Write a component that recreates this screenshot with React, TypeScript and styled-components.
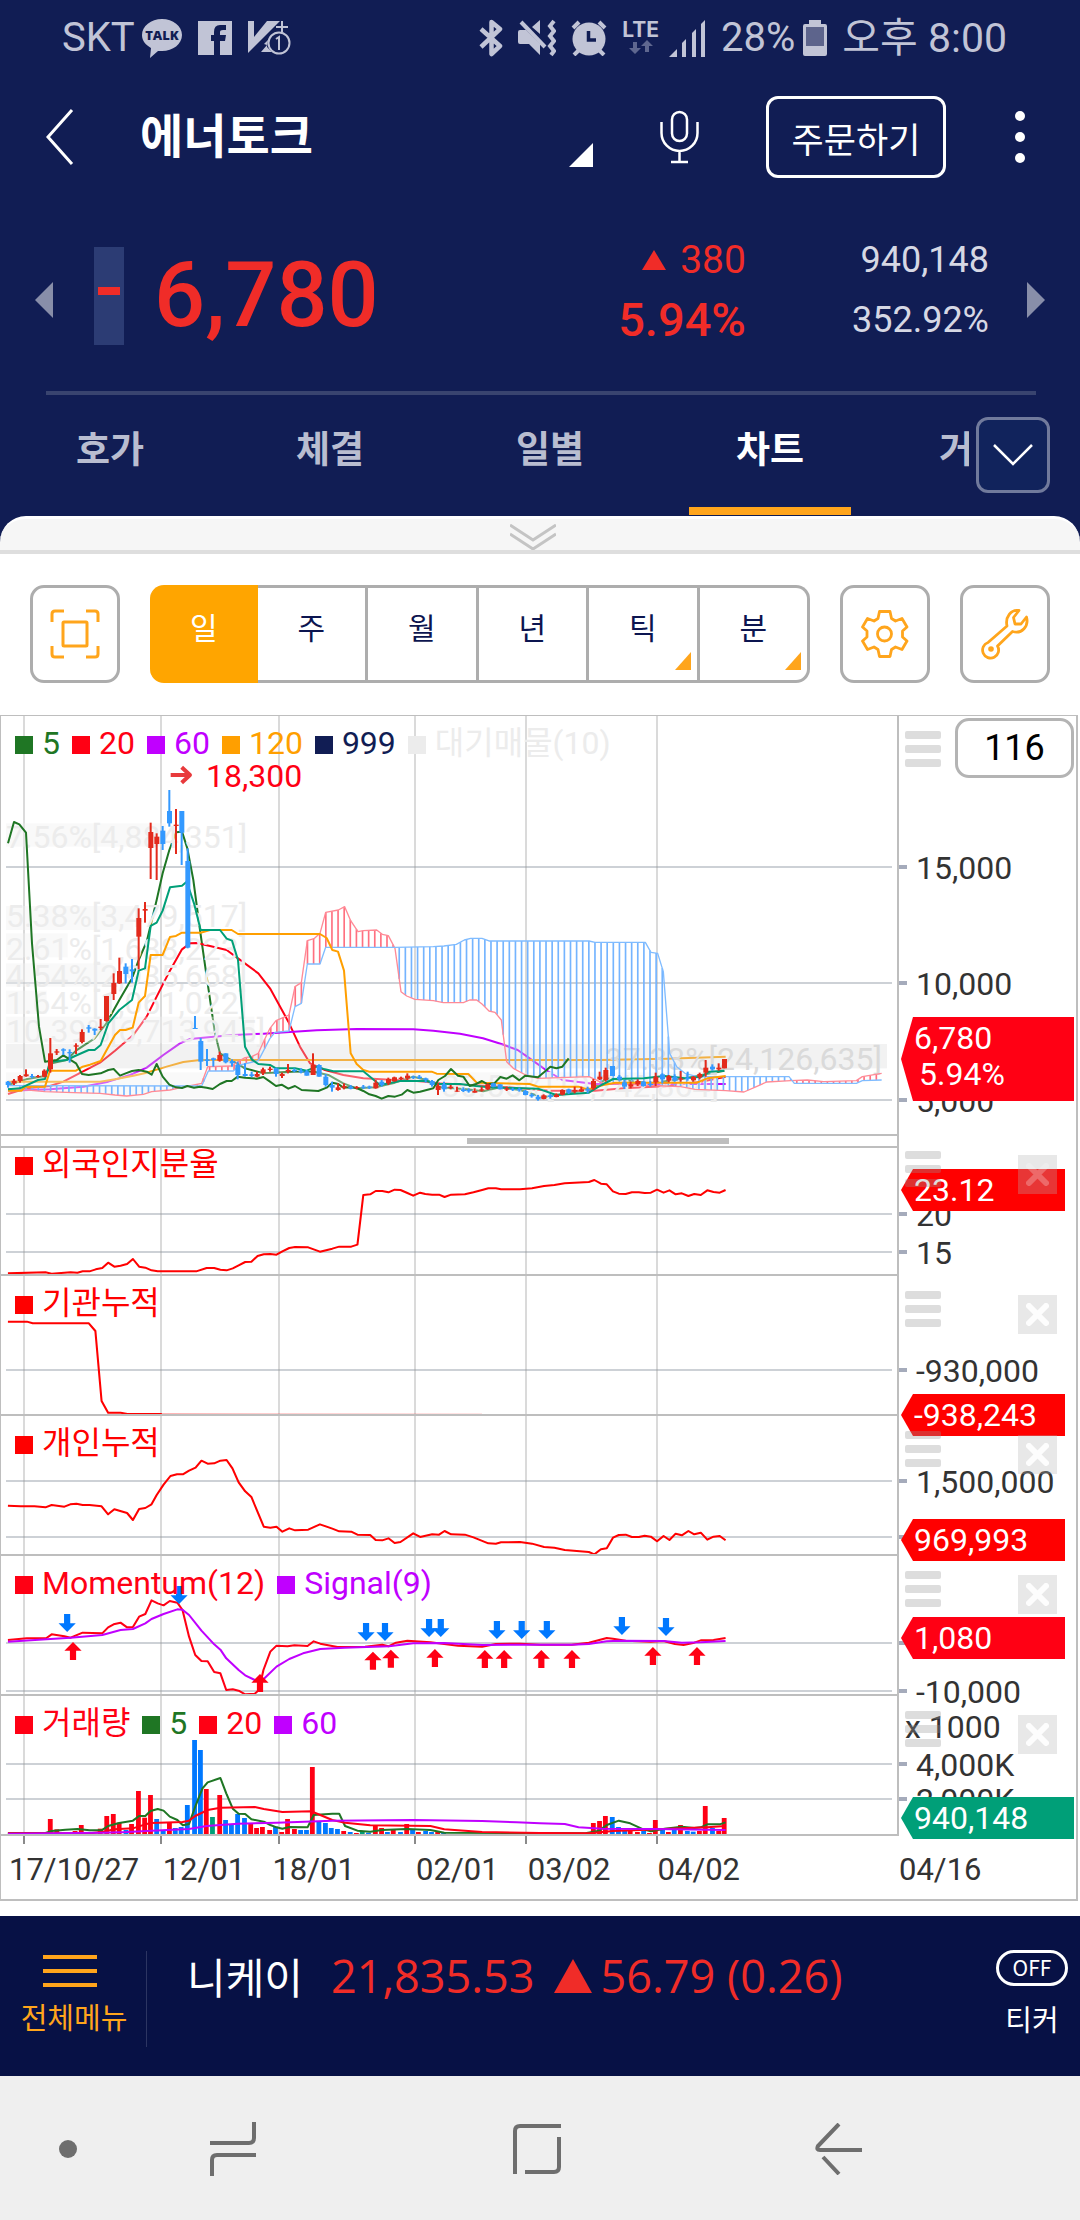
import React from "react";
import styled, { createGlobalStyle } from "styled-components";

const GlobalStyle = createGlobalStyle`
  *, *::before, *::after { box-sizing: border-box; }
  body {
    margin: 0;
    background: #ffffff;
    font-family: Roboto, "Noto Sans CJK KR", sans-serif;
  }
  button, input {
    font-family: inherit;
    margin: 0;
    padding: 0;
    border: 0;
    background: none;
    color: inherit;
  }
  svg { display: block; flex: none; }
  h1, p { margin: 0; }
`;

/* ---------- palette ---------- */
const NAVY = "#111d54";
const ORANGE = "#ffa51c";
const RED = "#ff0014";
const BRIGHT_RED = "#ff0000";
const GREEN = "#1f7624";
const TEAL = "#009f78";
const PURPLE = "#c000ff";
const UP = "#e32a1c";
const DOWN = "#3399ff";
const PRICE_RED = "#f02c28";
const LINE = "#bebebe";
const STATUS = "#c1c4d6";

/* ---------- page shell ---------- */
const Page = styled.main`
  display: flex;
  flex-direction: column;
  width: 100%;
`;

const Header = styled.header`
  background: ${NAVY};
  color: #fff;
  display: flex;
  flex-direction: column;
`;

const StatusBar = styled.div`
  height: 74px;
  padding: 2px 73px 0 62px;
  display: flex;
  justify-content: space-between;
  align-items: center;
  color: ${STATUS};
  font-size: 40px;
  line-height: 40px;
`;

const StatusGroup = styled.div<{ $gap: number }>`
  display: flex;
  align-items: center;
  gap: ${(p) => p.$gap}px;
`;

const Clock = styled.span`
  font-size: 41px;
`;

const Lte = styled.div`
  display: flex;
  flex-direction: column;
  align-items: center;
  margin-right: -5px;
  font-family: Inter, sans-serif;
  font-size: 21px;
  line-height: 20px;
  font-weight: 700;
`;

const TitleBar = styled.div`
  height: 126px;
  padding: 0 55px 0 46px;
  display: flex;
  align-items: center;
`;

const IconButton = styled.button`
  display: flex;
  align-items: center;
  justify-content: center;
  cursor: pointer;
`;

const StockPicker = styled.button`
  flex: 1;
  margin: 0 67px 0 66px;
  height: 60px;
  display: flex;
  justify-content: space-between;
  align-items: center;
  font-size: 47px;
  line-height: 60px;
  font-weight: 700;
  cursor: pointer;
`;

const PickerMark = styled.svg`
  align-self: flex-end;
`;

const OrderButton = styled.button`
  width: 180px;
  height: 82px;
  margin: 0 69px 0 67px;
  border: 3px solid #fff;
  border-radius: 12px;
  font-size: 35px;
  cursor: pointer;
`;

const Quote = styled.section`
  height: 191px;
  padding: 0 35px;
  display: flex;
  align-items: center;
`;

const DayRange = styled.div`
  width: 30px;
  height: 98px;
  margin: 0 30px 0 41px;
  background: #2c3c74;
  display: flex;
  justify-content: center;
  align-items: center;
`;

const RangeBar = styled.span`
  width: 22px;
  height: 8px;
  margin-bottom: 10px;
  background: ${PRICE_RED};
`;

const Price = styled.p`
  flex: 1;
  color: ${PRICE_RED};
  font-size: 90px;
  font-weight: 500;
`;

const Figures = styled.div<{ $color: string; $size: number; $gap: number }>`
  display: flex;
  flex-direction: column;
  align-items: flex-end;
  color: ${(p) => p.$color};
  font-size: ${(p) => p.$size}px;
  line-height: 60px;
  margin: 0 ${(p) => p.$gap}px 11px 0;
`;

const Change = styled.p`
  display: flex;
  align-items: center;
  gap: 14px;
`;

const Rate = styled.p`
  font-size: 47px;
  font-weight: 500;
`;

const Divider = styled.hr`
  height: 4px;
  width: auto;
  margin: 0 44px 0 46px;
  border: 0;
  background: #39446f;
`;

const TabBar = styled.nav`
  height: 121px;
  padding-right: 30px;
  display: flex;
`;

const TabList = styled.div`
  flex: 1;
  min-width: 0;
  height: 120px;
  display: flex;
  overflow: hidden;
  margin-right: 7px;
`;

const Tab = styled.button<{ $active?: boolean }>`
  flex: none;
  width: 220px;
  height: 120px;
  display: flex;
  flex-direction: column;
  align-items: center;
  justify-content: space-between;
  padding-top: 30px;
  font-size: 37px;
  line-height: 52px;
  font-weight: 700;
  color: ${(p) => (p.$active ? "#fff" : "#b9bdd0")};
  cursor: pointer;
  &::after {
    content: "";
    width: 162px;
    height: 8px;
    background: ${(p) => (p.$active ? ORANGE : "transparent")};
  }
`;

const MoreTabs = styled.button`
  width: 74px;
  height: 76px;
  margin-top: 22px;
  border: 3px solid #717a9c;
  border-radius: 12px;
  background: #11235c;
  display: flex;
  align-items: center;
  justify-content: center;
  cursor: pointer;
`;

const SheetEdge = styled.div`
  background: ${NAVY};
`;

const SheetHandle = styled.button`
  width: 100%;
  height: 38px;
  display: flex;
  justify-content: center;
  padding-top: 5px;
  padding-right: 14px;
  background: #f6f6f6;
  border-top: 3px solid #fff;
  border-bottom: 4px solid #dedede;
  border-radius: 26px 26px 0 0;
  cursor: pointer;
`;

/* ---------- toolbar ---------- */
const Toolbar = styled.div`
  height: 161px;
  padding: 0 30px 2px;
  display: flex;
  align-items: center;
  gap: 30px;
`;

const ToolButton = styled.button`
  flex: none;
  width: 90px;
  height: 98px;
  border: 3px solid #adadad;
  border-radius: 14px;
  display: flex;
  align-items: center;
  justify-content: center;
  cursor: pointer;
`;

const Segments = styled.div`
  flex: 1;
  display: flex;
  border-radius: 14px;
`;

const Segment = styled.button<{ $active?: boolean }>`
  flex: 1;
  height: 98px;
  display: grid;
  padding-bottom: 10px;
  place-items: center;
  position: relative;
  font-size: 30px;
  line-height: 40px;
  color: ${(p) => (p.$active ? "#fff" : "#0c1550")};
  background: ${(p) => (p.$active ? "#ffa500" : "#fff")};
  border: 3px solid ${(p) => (p.$active ? "#ffa500" : "#adadad")};
  border-left-width: 0;
  cursor: pointer;
  &:first-child { border-radius: 14px 0 0 14px; border-right-width: 0; }
  &:last-child { border-radius: 0 14px 14px 0; }
`;

const Corner = styled.svg`
  position: absolute;
  right: 6px;
  bottom: 10px;
`;

/* ---------- chart ---------- */
const Chart = styled.section`
  margin-right: 2px;
  border: solid ${LINE};
  border-width: 1px 2px 2px 1px;
`;

const PanelBox = styled.div<{ $h: number }>`
  position: relative;
  height: ${(p) => p.$h}px;
  display: grid;
  grid-template-columns: minmax(0, 1fr) 177px;
`;

const Plot = styled.div`
  position: relative;
  border-right: 2px solid ${LINE};
  border-bottom: 2px solid ${LINE};
  overflow: hidden;
`;

const Canvas = styled.svg`
  width: 100%;
  height: 100%;
`;

const Legend = styled.div<{ $tight?: boolean }>`
  position: absolute;
  left: 14px;
  top: ${(p) => (p.$tight ? -2 : 9)}px;
  display: flex;
  gap: 12px;
  font-size: 32px;
  line-height: 36px;
  white-space: nowrap;
`;

const LegendItem = styled.span<{ $color: string }>`
  display: flex;
  align-items: center;
  gap: 9px;
  color: ${(p) => p.$color};
  &::before {
    content: "";
    width: 18px;
    height: 18px;
    margin-top: 4px;
    background: ${(p) => p.$color};
  }
`;

const Axis = styled.div`
  position: relative;
  color: #333;
  font-size: 32px;
  line-height: 36px;
`;

const AxisLabel = styled.span<{ $y: number; $left?: number }>`
  position: absolute;
  left: ${(p) => p.$left ?? 17}px;
  top: ${(p) => p.$y - 18}px;
  white-space: nowrap;
`;

const Tick = styled.span<{ $y: number }>`
  position: absolute;
  left: 0;
  top: ${(p) => p.$y - 2}px;
  width: 8px;
  height: 4px;
  background: #a5abbb;
`;

const Tag = styled.strong<{ $y: number; $h: number; $color: string; $wide?: boolean }>`
  position: absolute;
  left: 2px;
  right: ${(p) => (p.$wide ? 2 : 11)}px;
  top: ${(p) => p.$y - p.$h / 2}px;
  height: ${(p) => p.$h}px;
  padding-left: 13px;
  padding-bottom: ${(p) => (p.$h > 42 ? 6 : 0)}px;
  display: flex;
  flex-direction: column;
  justify-content: center;
  color: #fff;
  font-weight: 400;
  background: ${(p) => p.$color};
  clip-path: polygon(12px 0, 100% 0, 100% 100%, 12px 100%, 0 50%);
`;

const TagRate = styled.span`
  padding-left: 5px;
`;

const Grip = styled.button<{ $tight?: boolean }>`
  position: absolute;
  left: 6px;
  top: ${(p) => (p.$tight ? 3 : 15)}px;
  width: 36px;
  height: 36px;
  display: flex;
  flex-direction: column;
  justify-content: space-between;
  cursor: grab;
  i {
    height: 8px;
    border-radius: 2px;
    background: rgba(148, 148, 148, 0.32);
  }
`;

const CloseButton = styled.button<{ $tight?: boolean }>`
  position: absolute;
  right: 19px;
  top: ${(p) => (p.$tight ? 7 : 19)}px;
  width: 39px;
  height: 39px;
  background: rgba(180, 180, 180, 0.3);
  display: grid;
  place-items: center;
  cursor: pointer;
`;

const BarCount = styled.input`
  position: absolute;
  right: 2px;
  top: 2px;
  width: 119px;
  height: 60px;
  border: 3px solid #b4b4b4;
  border-radius: 14px;
  background: #fff;
  color: #000;
  font-size: 36px;
  text-align: center;
`;

const ScrollStrip = styled.div`
  height: 12px;
  display: grid;
  grid-template-columns: minmax(0, 1fr) 177px;
`;

const ScrollTrack = styled.div`
  border-right: 2px solid ${LINE};
  border-bottom: 2px solid ${LINE};
  display: grid;
  grid-template-columns: 466fr 262fr 168fr;
  align-items: center;
`;

const ScrollThumb = styled.span`
  grid-column: 2;
  height: 6px;
  background: ${LINE};
`;

const DateAxis = styled.div`
  height: 63px;
  padding: 16px 0 0 8px;
  display: grid;
  grid-template-columns: 154fr 110fr 144fr 112fr 130fr 242fr 177px;
  color: #333;
  font-size: 31px;
  line-height: 36px;
  position: relative;
`;

const DateTicks = styled.svg`
  position: absolute;
  left: 0;
  top: 0;
  width: calc(100% - 177px);
  height: 8px;
`;

/* ---------- footer ---------- */
const TickerBar = styled.footer`
  margin-top: 15px;
  height: 160px;
  padding: 0 11px 0 20px;
  display: flex;
  align-items: flex-start;
  background: #071145;
  color: #fff;
  font-family: "Noto Sans CJK KR", sans-serif;
`;

const MenuButton = styled.button`
  width: 108px;
  padding-top: 39px;
  display: flex;
  flex-direction: column;
  align-items: center;
  gap: 9px;
  color: ${ORANGE};
  font-size: 29px;
  line-height: 40px;
  white-space: nowrap;
  cursor: pointer;
  svg { margin-right: 8px; }
`;

const Separator = styled.span`
  width: 1px;
  height: 96px;
  margin: 35px 40px 0 18px;
  background: #2c3562;
`;

const IndexName = styled.span`
  margin-top: 30px;
  margin-right: 28px;
  font-size: 42px;
  line-height: 60px;
`;

const IndexValue = styled.span`
  flex: 1;
  margin-top: 30px;
  display: flex;
  align-items: center;
  gap: 9px;
  color: ${PRICE_RED};
  font-family: "Open Sans", "Noto Sans CJK KR", sans-serif;
  font-size: 45px;
  line-height: 60px;
  font-weight: 400;
  white-space: nowrap;
  svg { margin-left: 10px; }
`;

const TickerToggle = styled.button`
  width: 74px;
  padding-top: 34px;
  display: flex;
  flex-direction: column;
  align-items: center;
  gap: 12px;
  font-size: 29px;
  line-height: 40px;
  cursor: pointer;
`;

const Pill = styled.span`
  width: 72px;
  height: 36px;
  border: 3px solid #fff;
  border-radius: 18px;
  font-size: 21px;
  line-height: 29px;
`;

const NavBar = styled.nav`
  height: 144px;
  padding: 2px 217px 0 59px;
  display: flex;
  align-items: center;
  justify-content: space-between;
  background: #efefef;
`;

const NavPair = styled.div`
  display: flex;
  align-items: center;
  gap: 133px;
`;

/* ---------- chart data and helpers ---------- */
const MONTHS = [24, 161, 279, 415, 526, 657];

type Point = [number, number];

const parse = (s: string): Point[] =>
  s.trim().split(/\s+/).map((p) => p.split(",").map(Number) as Point);

const valueAt = (line: Point[], x: number): number | null => {
  for (let i = 1; i < line.length; i++) {
    const [x0, y0] = line[i - 1];
    const [x1, y1] = line[i];
    if (x >= x0 && x <= x1) return x1 === x0 ? y1 : y0 + ((y1 - y0) * (x - x0)) / (x1 - x0);
  }
  return null;
};

const Trace = ({ points, color, width = 6, opacity = 1 }: { points: string; color: string; width?: number; opacity?: number }) => (
  <polyline points={points} fill="none" stroke={color} strokeWidth={width} opacity={opacity} strokeLinejoin="round" />
);

const Grid = ({ rows, top, height }: { rows: number[]; top: number; height: number }) => (
  <g>
    {rows.map((y) => (
      <rect key={y} x={6} y={y - 1} width={886} height={2} fill="#cdd1d6" />
    ))}
    {MONTHS.map((x) => (
      <rect key={x} x={x - 1} y={top} width={2} height={height} fill="#969696" opacity={0.35} />
    ))}
  </g>
);

const LAGGING =
  "24,430 42,366 58,373 78,398 96,730 117,980 135,1085 150,1083 170,1080 190,1066 209,1078 228,1090 246,1122 266,1125 302,1120 325,1110 341,1107 360,1127 377,1120 396,1113 416,1110 440,1115 455,1124 470,1092 488,1130 508,1154 528,1162 546,1164 562,1158 582,1163 600,1160 620,1163 638,1167 660,1152 680,1143 695,1143 713,1130 735,1133 770,1136 790,1131 810,1145 828,1158 845,1154 865,1166 885,1158 905,1170 955,1173 980,1163 997,1148 1015,1152 1030,1163 1050,1162 1070,1164 1090,1173 1108,1183 1127,1188 1145,1196 1165,1188 1185,1190 1205,1184 1222,1170 1240,1178 1260,1175 1280,1170 1300,1165 1315,1140 1335,1128 1353,1107 1374,1127 1390,1130 1409,1158 1428,1152 1446,1143 1463,1153 1483,1150 1501,1131 1520,1136 1538,1126 1558,1141 1576,1127 1614,1132 1632,1117 1651,1100 1669,1105 1687,1100 1706,1075";
const MA5 =
  "24,1155 78,1138 135,1128 155,1090 200,1080 228,1052 284,1015 319,970 358,900 396,835 416,780 440,725 470,600 488,520 508,450 528,397 546,395 562,445 580,540 600,690 620,830 645,1000 660,1060 690,1078 735,1105 790,1120 885,1115 940,1115 985,1125 1030,1150 1070,1165 1127,1162 1185,1148 1240,1130 1280,1140 1320,1162 1400,1168 1450,1174 1500,1162 1560,1170 1630,1192 1720,1176 1780,1166 1820,1135 1870,1140 1950,1150 2040,1138 2120,1122 2173,1112";
const MA20 =
  "24,1182 80,1165 150,1158 190,1145 248,1115 300,1088 345,1052 400,1005 440,950 470,890 508,815 546,748 570,730 590,729 630,738 680,750 714,775 775,820 810,865 865,965 900,1040 930,1090 975,1110 1030,1125 1090,1135 1185,1140 1250,1143 1320,1150 1500,1160 1650,1172 1785,1172 1871,1165 2006,1158 2104,1145 2177,1130";
const MA60 =
  "24,1172 150,1168 250,1160 325,1145 390,1125 440,1103 490,1065 540,1030 570,1017 625,1012 700,1005 790,1001 870,996 950,991 1070,987 1240,988 1300,992 1380,1001 1449,1015 1504,1032 1553,1050 1589,1075 1638,1110 1687,1140 1785,1152 2177,1152";
const MA120 = "24,1145 300,1145 345,1138 400,1127 440,1118 500,1100 550,1086 600,1080 1800,1080 2000,1076 2177,1070";
const CONVERSION =
  "24,1168 60,1165 114,1140 135,1137 150,1085 200,1080 225,1068 266,1050 284,1050 302,1035 325,970 358,930 396,900 416,812 435,805 452,678 470,668 488,632 510,562 546,557 560,545 582,610 602,690 660,690 680,716 696,722 714,780 735,1040 755,1078 775,1092 810,1095 828,1105 885,1105 920,1112 950,1100 975,1108 1000,1114 1090,1114 1110,1130 1140,1155 1200,1143 1280,1143 1310,1152 1380,1152 1428,1158 1467,1162 1614,1166 1669,1185 1767,1178 1804,1155 1840,1137 1932,1135 1993,1128 2055,1135 2104,1130 2128,1115 2173,1112";
const BASE =
  "24,1172 65,1172 75,1160 135,1160 150,1112 228,1112 248,1100 270,1094 302,1083 320,1050 345,1005 360,990 377,990 398,983 416,908 435,888 452,765 488,765 510,711 528,708 546,698 602,698 630,690 695,690 714,702 960,702 980,714 997,750 1014,755 1032,812 1052,1060 1070,1092 1090,1110 1108,1115 1295,1115 1310,1121 1405,1122 1430,1148 1589,1152 1614,1160 1736,1160 1755,1166 1773,1166 1810,1155 1846,1148 2091,1148 2122,1135 2177,1128";
const SPAN_A =
  "24,1165 60,1168 135,1175 220,1178 300,1180 345,1185 380,1188 430,1183 455,1175 510,1170 545,1162 605,1150 623,1100 695,1098 715,1085 735,1073 755,1070 775,1060 793,1020 810,985 828,962 867,945 885,860 904,848 922,722 942,716 960,700 977,637 1015,630 1034,620 1052,662 1074,695 1090,692 1130,690 1147,703 1165,707 1185,745 1203,875 1220,888 1245,898 1300,902 1330,908 1390,908 1409,900 1430,900 1446,912 1467,933 1485,937 1504,960 1520,1085 1540,1105 1577,1125 1614,1135 1767,1130 1810,1150 1993,1158 2042,1160 2085,1168 2177,1172 2232,1176 2269,1160 2300,1146 2373,1142 2422,1140 2471,1145 2569,1142 2587,1130 2645,1120";
const SPAN_B =
  "24,1157 605,1158 625,1113 700,1113 720,1095 775,1082 810,1015 825,997 867,993 885,920 904,910 922,792 960,792 977,742 1185,742 1300,740 1332,738 1369,733 1393,720 1412,715 1446,715 1467,723 1767,723 1785,727 1936,727 1953,757 1973,760 1990,815 2009,1060 2030,1100 2055,1120 2091,1130 2367,1130 2383,1150 2569,1150 2587,1142 2645,1140";

/* x, high, low, body top, body bottom, direction */
const CANDLES = `24,1143,1163,1145,1155,d 42,1137,1155,1142,1150,u 60,1125,1148,1128,1143,u 78,1108,1130,1123,1129,u 96,1122,1135,1128,1131,d
114,1125,1133,1128,1131,u 133,1108,1132,1112,1130,u 151,1014,1118,1060,1108,u 170,1047,1065,1054,1058,u 190,1045,1065,1048,1052,d
209,1048,1088,1056,1060,d 228,1030,1062,1036,1040,u 246,988,1030,996,1026,u 266,975,998,982,986,d 284,985,1005,986,992,d
302,957,990,980,984,u 319,888,965,888,963,u 341,820,900,849,882,u 358,773,852,813,850,u 377,790,850,800,822,d
396,777,848,808,814,d 416,625,808,654,710,u 435,606,668,627,632,u 452,368,537,396,444,u 470,400,540,410,432,u
488,378,450,392,432,d 508,270,380,333,370,d 528,327,462,374,378,u 545,333,495,333,398,d 563,445,745,483,743,d
585,948,987,984,987,d 602,1014,1110,1023,1085,d 621,1047,1098,1078,1083,d 640,1073,1100,1075,1080,d 659,1055,1085,1065,1082,u
677,1060,1090,1060,1087,d 696,1078,1100,1083,1090,d 713,1085,1138,1095,1125,d 735,1090,1130,1122,1128,d 755,1115,1132,1123,1128,d
771,1115,1132,1122,1130,u 789,1103,1125,1108,1120,u 810,1100,1115,1106,1110,u 828,1103,1130,1105,1122,d 846,1118,1134,1122,1128,u
864,1092,1120,1110,1115,u 883,1105,1117,1110,1114,d 903,1105,1120,1112,1117,d 920,1110,1127,1114,1127,d 939,1060,1125,1095,1125,u
957,1093,1130,1095,1130,d 977,1122,1160,1130,1155,d 996,1145,1175,1155,1163,d 1014,1150,1172,1162,1170,u 1032,1150,1168,1158,1163,u
1052,1155,1168,1160,1166,d 1070,1158,1168,1161,1164,u 1090,1155,1167,1160,1163,d 1108,1157,1167,1160,1163,d 1127,1140,1166,1148,1165,u
1145,1140,1160,1145,1155,d 1165,1133,1155,1137,1150,u 1183,1130,1145,1132,1144,u 1203,1130,1140,1133,1137,u 1222,1120,1140,1127,1135,u
1240,1127,1137,1130,1133,d 1258,1125,1137,1130,1134,d 1277,1133,1148,1135,1140,d 1296,1140,1160,1143,1155,d 1314,1150,1185,1157,1170,u
1332,1145,1175,1153,1168,d 1352,1155,1168,1160,1164,u 1371,1160,1175,1172,1175,u 1390,1162,1176,1168,1173,d 1406,1165,1178,1170,1174,d
1424,1165,1178,1173,1178,u 1445,1160,1175,1168,1172,u 1463,1150,1170,1153,1168,u 1480,1148,1162,1150,1160,d 1500,1153,1168,1153,1168,d
1520,1160,1173,1165,1169,u 1538,1163,1173,1167,1170,d 1558,1163,1175,1167,1171,d 1576,1170,1186,1173,1185,d 1595,1180,1193,1184,1189,d
1614,1185,1202,1190,1198,d 1631,1183,1198,1186,1197,u 1651,1182,1196,1186,1191,d 1669,1180,1192,1184,1191,u 1687,1168,1186,1170,1184,u
1706,1166,1182,1168,1178,d 1724,1160,1180,1170,1175,u 1744,1160,1176,1168,1174,u 1763,1160,1180,1166,1172,d 1780,1137,1170,1143,1165,u
1799,1115,1140,1130,1138,u 1817,1103,1145,1110,1140,u 1837,1098,1128,1098,1128,d 1858,1125,1142,1130,1138,d 1873,1140,1167,1147,1160,d
1892,1145,1165,1153,1160,u 1913,1138,1158,1143,1153,u 1930,1143,1160,1145,1158,d 1951,1143,1160,1152,1155,d 1967,1118,1158,1130,1147,u
1987,1120,1150,1123,1138,d 2006,1125,1147,1128,1142,u 2024,1123,1145,1130,1142,d 2042,1113,1145,1135,1139,u 2063,1115,1142,1133,1137,d
2080,1128,1145,1131,1141,u 2099,1118,1138,1122,1132,u 2117,1080,1130,1103,1118,u 2137,1093,1112,1100,1108,d 2156,1090,1112,1103,1108,u
2173,1077,1105,1077,1105,u`
  .trim()
  .split(/\s+/)
  .map((row) => row.split(","));

const cloud = (() => {
  const a = parse(SPAN_A);
  const b = parse(SPAN_B);
  const bars: { x: number; y0: number; y1: number; up: boolean }[] = [];
  for (let x = 60; x < 2645; x += 18.35) {
    const ya = valueAt(a, x);
    const yb = valueAt(b, x);
    if (ya !== null && yb !== null) bars.push({ x, y0: ya, y1: yb, up: ya < yb });
  }
  return bars;
})();

/* share of volume resting at each price band: bar x, y, width, height */
const BANDS = [
  [18, 370, 480, 70],
  [18, 618, 382, 72],
  [18, 700, 185, 72],
  [18, 790, 320, 70],
  [18, 872, 122, 70],
  [18, 950, 745, 80],
];

const VOLUME_AT_PRICE: [string, number][] = [
  ["7.56%[4,884,351]", 148],
  ["5.38%[3,479,517]", 227],
  ["2.61%[1,688,223]", 260],
  ["4.54%[2,935,668]", 287],
  ["1.64%[1,061,022]", 314],
  ["10.39%[6,713,945]", 342],
];

const FOREIGN =
  "23,460 132,457 150,461 205,457 225,458 240,454 260,454 278,448 297,444 314,428 332,440 350,437 369,432 386,417 404,440 422,443 440,451 458,454 570,454 600,444 622,444 640,449 658,451 676,445 693,436 712,426 730,425 748,408 766,403 785,402 803,404 820,394 840,384 857,381 895,382 929,395 965,386 985,380 1020,380 1038,374 1055,225 1075,223 1091,213 1110,213 1128,217 1146,209 1163,210 1183,219 1200,227 1220,218 1235,222 1255,224 1275,224 1291,231 1310,224 1350,223 1375,217 1400,210 1418,205 1440,205 1455,208 1510,208 1545,205 1580,198 1610,195 1640,190 1710,186 1726,180 1745,191 1762,193 1780,214 1797,221 1817,222 1835,217 1855,217 1872,219 1890,218 1908,209 1927,218 1944,211 1962,223 1980,220 1999,228 2016,222 2035,225 2054,211 2072,216 2090,218 2107,210";
const INDIVIDUAL =
  "23,1157 60,1159 100,1159 132,1162 150,1155 187,1160 204,1153 222,1151 240,1155 260,1155 295,1159 314,1183 332,1168 369,1179 386,1200 404,1167 422,1164 440,1153 455,1125 475,1094 495,1068 514,1063 531,1063 549,1052 568,1043 585,1022 603,1031 622,1030 640,1022 658,1020 675,1045 693,1087 712,1114 730,1131 748,1176 766,1220 785,1223 803,1220 820,1235 840,1225 857,1231 895,1229 929,1213 965,1226 985,1234 1020,1235 1038,1244 1075,1245 1091,1260 1110,1261 1128,1255 1146,1269 1163,1266 1200,1240 1220,1251 1255,1243 1275,1244 1291,1233 1310,1243 1350,1244 1375,1252 1418,1270 1440,1271 1455,1267 1510,1266 1545,1271 1580,1281 1610,1283 1640,1290 1710,1296 1726,1303 1745,1288 1762,1285 1780,1253 1797,1245 1817,1244 1835,1251 1855,1251 1872,1247 1890,1250 1908,1264 1927,1248 1944,1260 1962,1241 1980,1246 1999,1233 2016,1243 2035,1238 2054,1259 2072,1250 2090,1248 2107,1261";
const MOMENTUM =
  "23,300 78,295 135,294 150,283 187,289 205,293 240,278 297,280 314,262 330,253 350,248 369,262 386,261 404,230 422,222 440,181 458,190 475,196 493,183 515,188 530,210 549,290 567,345 585,363 603,364 622,396 640,400 657,450 676,448 693,452 712,463 740,461 752,450 765,390 785,335 803,317 835,319 855,316 893,318 911,304 930,311 980,321 1060,320 1110,314 1128,319 1150,308 1183,302 1250,307 1290,312 1330,317 1400,320 1440,312 1510,311 1570,314 1660,314 1710,308 1762,294 1780,296 1817,302 1890,305 1927,303 1960,312 1985,315 2016,308 2035,301 2072,300 2107,294";
const SIGNAL =
  "23,305 135,298 205,293 297,285 350,270 386,267 422,250 440,237 475,222 515,208 530,209 549,225 585,272 622,313 640,329 657,355 693,390 712,406 740,420 752,424 765,418 803,380 840,357 880,340 930,327 1000,323 1130,319 1200,310 1290,309 1400,315 1500,314 1660,314 1710,312 1762,304 1800,302 1927,303 1980,308 2035,307 2107,303";
const SELL_MARKS = parse("195,222 520,138 1063,249 1118,249 1246,237 1280,237 1443,243 1515,243 1588,243 1806,231 1934,234");
const BUY_MARKS = parse("212,306 755,402 1083,335 1135,329 1263,327 1408,330 1464,330 1572,330 1661,330 1896,321 2024,321");

const VOLUMES =
  "146,837,r 165,868,r 218,873,r 236,855,r 291,866,r 310,828,r 329,822,r 346,848,r 366,870,b 382,852,r 402,753,r 420,833,r 437,765,r 455,837,b 474,870,b 492,846,r 509,864,b 526,861,b 544,795,b 565,600,b 582,630,b 599,747,r 617,831,g 638,765,r 655,840,b 672,855,b 690,822,b 710,834,b 728,850,r 745,864,r 762,861,r 783,870,r 800,860,b 818,876,r 835,837,r 855,867,r 873,870,b 890,870,b 907,681,r 926,843,b 945,849,b 962,864,b 980,867,b 998,873,r 1017,876,b 1035,879,r 1052,876,g 1070,878,b 1090,858,r 1108,864,r 1125,876,b 1142,870,r 1163,876,b 1181,852,r 1198,868,b 1215,876,r 1236,873,b 1253,876,b 1271,876,r 1288,879,b 1723,849,r 1741,843,r 1758,828,r 1778,831,b 1796,861,b 1814,873,b 1830,870,r 1851,876,r 1869,873,b 1886,879,r 1903,840,r 1924,868,b 1941,876,r 1958,870,b 1976,855,r 1996,873,b 2013,875,b 2031,873,r 2048,798,r 2069,864,b 2087,873,r 2103,834,r"
    .split(" ")
    .map((v) => v.split(","));
const VOLUME_COLORS: Record<string, string> = { r: RED, b: "#0078ff", g: TEAL };
const VOLUME_MA5 =
  "23,879 132,879 150,873 190,869 225,867 260,871 295,871 314,858 346,849 386,842 404,828 422,828 437,813 458,807 475,812 493,830 515,840 531,856 549,852 567,800 588,745 603,727 640,714 657,760 676,806 693,821 712,822 730,838 766,845 785,855 803,862 820,866 840,861 893,862 911,825 965,821 985,821 1002,858 1038,872 1075,875 1110,870 1181,867 1250,870 1290,878 1700,880 1740,872 1762,855 1797,842 1830,850 1868,868 1890,874 1930,866 1980,860 2016,864 2035,862 2054,853 2090,853 2107,847";
const VOLUME_MA20 =
  "23,880 260,880 297,876 332,868 386,865 422,853 440,849 530,846 549,842 567,828 603,810 640,803 740,801 766,807 820,816 905,814 930,825 965,840 1002,848 1075,856 1250,858 1290,868 1400,876 1568,879 1710,880 1780,873 1860,870 1980,865 2054,862 2107,858";
const VOLUME_MA60 =
  "23,881 300,878 369,876 440,872 549,867 600,858 690,851 803,848 965,842 1200,840 1400,843 1500,847 1568,850 1640,852 1680,862 1750,866 1900,867 2107,870";

const PRICE_SCALE = "scale(0.33333)";
const STUDY_SCALE = "scale(0.34436 0.33333)";

const Handle = ({ name, tight }: { name: string; tight?: boolean }) => (
  <Grip $tight={tight} aria-label={`${name} 이동`}>
    <i />
    <i />
    <i />
  </Grip>
);

const Close = ({ name, tight }: { name: string; tight?: boolean }) => (
  <CloseButton $tight={tight} aria-label={`${name} 닫기`}>
    <svg width="23" height="23" viewBox="0 0 23 23">
      <path d="M3 3 L20 20 M20 3 L3 20" stroke="#fff" strokeWidth="6" strokeLinecap="round" opacity={tight ? 0.25 : 0.95} />
    </svg>
  </CloseButton>
);

type StudyProps = {
  name: string;
  height: number;
  top: number;
  rows: number[];
  legend: [string, string][];
  labels: [string, number][];
  tag: [string, number];
  tagColor?: string;
  wideTag?: boolean;
  tight?: boolean;
  unit?: string;
  children: React.ReactNode;
};

const Study = ({ name, height, top, rows, legend, labels, tag, tagColor = BRIGHT_RED, wideTag, tight, unit, children }: StudyProps) => (
  <PanelBox $h={height}>
    <Plot>
      <Canvas viewBox={`1 ${top} 896 ${height - 2}`} preserveAspectRatio="none">
        <Grid rows={rows} top={top} height={height} />
        <g transform={STUDY_SCALE}>{children}</g>
      </Canvas>
      <Legend $tight={tight}>
        {legend.map(([text, color]) => (
          <LegendItem key={text} $color={color}>{text}</LegendItem>
        ))}
      </Legend>
    </Plot>
    <Axis>
      {rows.map((y) => <Tick key={y} $y={y - top} />)}
      {unit && <AxisLabel $y={31} $left={6}>{unit}</AxisLabel>}
      {labels.map(([text, y]) => <AxisLabel key={text} $y={y}>{text}</AxisLabel>)}
      <Tag $y={tag[1]} $h={42} $color={tagColor} $wide={wideTag}>{tag[0]}</Tag>
      <Handle name={name} tight={tight} />
      <Close name={name} tight={tight} />
    </Axis>
  </PanelBox>
);

const PricePanel = () => (
  <PanelBox $h={420}>
    <Plot>
      <Canvas viewBox="1 16 896 418" preserveAspectRatio="none">
        <Grid rows={[167, 283, 400]} top={16} height={418} />
        <g transform={PRICE_SCALE}>
          <Trace points={MA5} color={GREEN} />
          <Trace points={MA20} color={RED} />
          <Trace points={MA60} color={PURPLE} />
          <Trace points={MA120} color="#ff9f00" />
          <g fill="#f2f2f2" opacity={0.4}>
            {BANDS.map(([x, y, w, h]) => <rect key={y} x={x} y={y} width={w} height={h} />)}
            <rect x={18} y={1117} width={2135} height={78} />
          </g>
          <rect x={18} y={1032} width={2643} height={73} fill="#d8d8d8" opacity={0.32} />
        </g>
        <g fill="#ececec" fontSize="32" fontFamily="Roboto, sans-serif">
          {VOLUME_AT_PRICE.map(([text, y]) => <text key={text} x={6} y={y}>{text}</text>)}
          <text x={719} y={397} textAnchor="end">30.55%[19,742,864]</text>
          <text x={882} y={370} textAnchor="end" fill="#dadada">37.33%[24,126,635]</text>
        </g>
        <g transform={PRICE_SCALE}>
          {cloud.map((c) => (
            <line key={c.x} x1={c.x} x2={c.x} y1={c.y0} y2={c.y1} stroke={c.up ? "#ff7080" : "#74b4ff"} strokeWidth={5} />
          ))}
          <Trace points={SPAN_A} color="#ff8a96" width={4} />
          <Trace points={SPAN_B} color="#80bcff" width={4} />
          <Trace points={BASE} color="#ff9f00" />
          <Trace points={CONVERSION} color={TEAL} />
          <Trace points={LAGGING} color={GREEN} />
          {CANDLES.map(([x, high, low, open, close, dir]) => (
            <g key={x} fill={dir === "u" ? UP : DOWN}>
              <rect x={+x - 3} y={+high} width={6} height={+low - +high} />
              <rect x={+x - 7} y={+open} width={15} height={+close - +open} />
            </g>
          ))}
          <path d="M512,225 H568 M545,202 L570,225 L545,248" fill="none" stroke="#e83a3c" strokeWidth={12} strokeLinejoin="round" />
        </g>
        <text x={206} y={87} fontSize="32" fontFamily="Roboto, sans-serif" fill={RED}>18,300</text>
      </Canvas>
      <Legend>
        <LegendItem $color={GREEN}>5</LegendItem>
        <LegendItem $color={RED}>20</LegendItem>
        <LegendItem $color={PURPLE}>60</LegendItem>
        <LegendItem $color="#ff9f00">120</LegendItem>
        <LegendItem $color={NAVY}>999</LegendItem>
        <LegendItem $color="#ececec">대기매물(10)</LegendItem>
      </Legend>
    </Plot>
    <Axis>
      {[151, 267, 384].map((y) => <Tick key={y} $y={y} />)}
      <AxisLabel $y={152}>15,000</AxisLabel>
      <AxisLabel $y={268}>10,000</AxisLabel>
      <AxisLabel $y={385}>5,000</AxisLabel>
      <Tag $y={343} $h={84} $color={RED} $wide>
        6,780
        <TagRate>5.94%</TagRate>
      </Tag>
      <Handle name="가격" />
      <BarCount aria-label="봉 개수" defaultValue="116" />
    </Axis>
  </PanelBox>
);

const DATES = ["17/10/27", "12/01", "18/01", "02/01", "03/02", "04/02", "04/16"];

export default function App() {
  return (
    <Page>
      <GlobalStyle />
      <Header>
        <StatusBar>
          <StatusGroup $gap={16}>
            <StatusGroup $gap={7}>
              <span>SKT</span>
              <svg width="40" height="40" viewBox="0 0 40 40">
                <path d="M20 1 C31 1 40 8 40 17 C40 26 31 33 20 33 L16 33 L8 40 L9 30 C4 27 0 23 0 17 C0 8 9 1 20 1Z" fill={STATUS} />
                <text x="20" y="22" textAnchor="middle" fontSize="13" fontWeight="800" fontFamily="Open Sans, sans-serif" fill={NAVY}>TALK</text>
              </svg>
            </StatusGroup>
            <svg width="34" height="34" viewBox="0 0 34 34">
              <path fill={STATUS} d="M0 0 H34 V34 H22 V20 H27 L28 14 H22 V11 Q22 9 25 9 H28 V4 H22 Q16 4 16 11 V14 H13 V20 H16 V34 H0Z" />
            </svg>
            <svg width="43" height="36" viewBox="0 0 43 36">
              <path fill={STATUS} d="M0 1 H6 V17 L19 1 H32 L14 19 L0 33Z M20 20 L16 24 L19 25 L13 32 H24 L19 27Z" />
              <path d="M34 1 V12 M28 7 H40" stroke={STATUS} strokeWidth="2" />
              <circle cx="31" cy="23" r="10.5" fill={NAVY} stroke={STATUS} strokeWidth="2" />
              <path d="M28 19 L31 17 V30" fill="none" stroke={STATUS} strokeWidth="2" />
            </svg>
          </StatusGroup>
          <StatusGroup $gap={15}>
            <svg width="24" height="38" viewBox="0 0 24 38">
              <path d="M2 10 L21 27 L12.500 35 V3 L21 10 L2 28" fill="none" stroke={STATUS} strokeWidth="4.500" strokeLinejoin="round" />
            </svg>
            <svg width="38" height="38" viewBox="0 0 38 38">
              <path fill={STATUS} d="M0 13 Q0 11 2 11 H8 L22 25 V36 L11 25 H2 Q0 25 0 23Z M22 1 V15 L14 8Z" />
              <path d="M3 3 L27 28" stroke={STATUS} strokeWidth="4" />
              <path d="M36 2 L32 7 L36 12 L32 17 L36 22 L32 27 L36 32 L33 36" fill="none" stroke={STATUS} strokeWidth="4" />
            </svg>
            <svg width="36" height="36" viewBox="0 0 36 36">
              <circle cx="18" cy="19" r="16.500" fill={STATUS} />
              <path d="M2 8 L8 2 M34 8 L28 2 M8 30 L3 35 M28 30 L33 35" stroke={STATUS} strokeWidth="4" />
              <path d="M17.500 11 V20 H25" fill="none" stroke={NAVY} strokeWidth="3.500" />
            </svg>
            <Lte>
              LTE
              <svg width="24" height="16" viewBox="0 0 24 16">
                <path fill="#5f678f" d="M4 2 H8 V8 H12 L6 14 L0 8 H4Z M16 12 H20 V6 H24 L18 0 L12 6 H16Z" />
              </svg>
            </Lte>
            <svg width="37" height="37" viewBox="0 0 37 37">
              <path fill={STATUS} d="M0 37 H8 V29Z M13 37 H17 V19 L13 23Z M23 37 H27 V9 L23 13Z M32 37 H36 V0 L32 4Z" />
            </svg>
            <StatusGroup $gap={8}>
              <span>28%</span>
              <svg width="24" height="36" viewBox="0 0 24 36">
                <path fill={STATUS} d="M6 0 H18 V4 H22 Q24 4 24 6 V34 Q24 36 22 36 H2 Q0 36 0 34 V6 Q0 4 2 4 H6Z" />
                <rect x="3" y="7" width="18" height="19" fill="#5d648c" />
              </svg>
            </StatusGroup>
            <Clock>오후 8:00</Clock>
          </StatusGroup>
        </StatusBar>

        <TitleBar>
          <IconButton aria-label="뒤로">
            <svg width="28" height="56" viewBox="0 0 28 56">
              <path d="M26 1 L2 28 L26 55" fill="none" stroke="#fff" strokeWidth="3" />
            </svg>
          </IconButton>
          <StockPicker>
            <span>에너토크</span>
            <PickerMark width="24" height="24" viewBox="0 0 24 24">
              <path d="M24 0 V24 H0Z" fill="#fff" />
            </PickerMark>
          </StockPicker>
          <IconButton aria-label="음성 검색">
            <svg width="39" height="54" viewBox="0 0 39 54">
              <g fill="none" stroke="#fff" strokeWidth="2.500">
                <rect x="12" y="2" width="15" height="29" rx="7.500" />
                <path d="M1.500 12 V23 A18 18 0 0 0 37.500 23 V12 M19.500 41 V51 M11 52 H28" />
              </g>
            </svg>
          </IconButton>
          <OrderButton>주문하기</OrderButton>
          <IconButton aria-label="더보기">
            <svg width="10" height="54" viewBox="0 0 10 54">
              <g fill="#fff">
                <circle cx="5" cy="6" r="5" />
                <circle cx="5" cy="27" r="5" />
                <circle cx="5" cy="48" r="5" />
              </g>
            </svg>
          </IconButton>
        </TitleBar>

        <Quote>
          <IconButton aria-label="이전 종목">
            <svg width="18" height="44" viewBox="0 0 18 44">
              <path d="M18 8 V44 L0 26Z" fill="#888ea9" />
            </svg>
          </IconButton>
          <DayRange>
            <RangeBar />
          </DayRange>
          <Price>6,780</Price>
          <Figures $color={PRICE_RED} $size={39} $gap={106}>
            <Change>
              <svg width="24" height="20" viewBox="0 0 24 20">
                <path d="M12 0 L24 20 H0Z" fill={PRICE_RED} />
              </svg>
              380
            </Change>
            <Rate>5.94%</Rate>
          </Figures>
          <Figures $color="#d6d8e4" $size={36} $gap={38}>
            <p>940,148</p>
            <p>352.92%</p>
          </Figures>
          <IconButton aria-label="다음 종목">
            <svg width="18" height="44" viewBox="0 0 18 44">
              <path d="M0 8 V44 L18 26Z" fill="#888ea9" />
            </svg>
          </IconButton>
        </Quote>

        <Divider />

        <TabBar>
          <TabList>
            <Tab>호가</Tab>
            <Tab>체결</Tab>
            <Tab>일별</Tab>
            <Tab $active>차트</Tab>
            <Tab>거래원</Tab>
          </TabList>
          <MoreTabs aria-label="탭 더보기">
            <svg width="40" height="24" viewBox="0 0 40 24">
              <path d="M1 2 L20 21 L39 2" fill="none" stroke="#fff" strokeWidth="2.500" />
            </svg>
          </MoreTabs>
        </TabBar>
      </Header>

      <SheetEdge>
        <SheetHandle aria-label="시세 펼치기">
          <svg width="46" height="26" viewBox="0 0 46 26">
            <path d="M0 1 L23 16 L46 1 M0 10 L23 25 L46 10" fill="none" stroke="#c4c4c4" strokeWidth="3" />
          </svg>
        </SheetHandle>
      </SheetEdge>

      <Toolbar>
        <ToolButton aria-label="전체 화면">
          <svg width="50" height="50" viewBox="0 0 50 50">
            <g fill="none" stroke={ORANGE} strokeWidth="3">
              <path d="M2 13 V5 Q2 2 5 2 H14 M36 2 H45 Q48 2 48 5 V13 M48 37 V45 Q48 48 45 48 H36 M14 48 H5 Q2 48 2 45 V37" />
              <rect x="13" y="13" width="24" height="24" rx="1" />
            </g>
          </svg>
        </ToolButton>
        <Segments role="group" aria-label="차트 주기">
          <Segment $active>일</Segment>
          <Segment>주</Segment>
          <Segment>월</Segment>
          <Segment>년</Segment>
          <Segment>
            틱
            <Corner width="16" height="18" viewBox="0 0 16 18">
              <path d="M16 0 V18 H0Z" fill={ORANGE} />
            </Corner>
          </Segment>
          <Segment>
            분
            <Corner width="16" height="18" viewBox="0 0 16 18">
              <path d="M16 0 V18 H0Z" fill={ORANGE} />
            </Corner>
          </Segment>
        </Segments>
        <ToolButton aria-label="설정">
          <svg width="48" height="48" viewBox="0 0 48 48">
            <g fill="none" stroke={ORANGE} strokeWidth="2.800" strokeLinejoin="round">
              <path d="M18.500 1.500 H29 L30.500 8.500 L34.500 11 L41 8.500 L46 17 L41.500 21 V27 L46 31 L41 39.500 L34.500 37 L30.500 39.500 L29 46.500 H18.500 L17 39.500 L13 37 L6.500 39.500 L1.500 31 L6 27 V21 L1.500 17 L6.500 8.500 L13 11 L17 8.500Z" />
              <circle cx="23.500" cy="24" r="7" />
            </g>
          </svg>
        </ToolButton>
        <ToolButton aria-label="도구">
          <svg width="48" height="52" viewBox="0 0 48 52">
            <g fill="none" stroke={ORANGE} strokeWidth="2.800" strokeLinejoin="round">
              <path d="M7 34.500 L26 18 C24 9 30 1 38 2.500 L32.500 9.500 L34 16 L40 16 L45.500 9 C48 18 41 26.500 31.500 23.500 L16.500 38 A8 8 0 1 1 7 34.500Z" />
            </g>
            <circle cx="10" cy="41" r="2.800" fill={ORANGE} />
          </svg>
        </ToolButton>
      </Toolbar>

      <Chart aria-label="에너토크 일봉 차트">
        <PricePanel />
        <ScrollStrip>
          <ScrollTrack>
            <ScrollThumb />
          </ScrollTrack>
        </ScrollStrip>

        <Study
          name="외국인지분율"
          height={128}
          top={28}
          rows={[94, 132]}
          legend={[["외국인지분율", BRIGHT_RED]]}
          labels={[["20", 67], ["15", 105]]}
          tag={["23.12", 42]}
          tight
        >
          <Trace points={FOREIGN} color={BRIGHT_RED} />
        </Study>

        <Study
          name="기관누적"
          height={140}
          top={156}
          rows={[250]}
          legend={[["기관누적", BRIGHT_RED]]}
          labels={[["-930,000", 95]]}
          tag={["-938,243", 139]}
        >
          <Trace points="23,605 78,605 95,610 258,610 277,633 295,843 314,878 350,878 370,882 470,882" color={BRIGHT_RED} />
          <Trace points="470,882 1400,883" color={BRIGHT_RED} width={4} opacity={0.4} />
        </Study>

        <Study
          name="개인누적"
          height={140}
          top={296}
          rows={[361, 417]}
          legend={[["개인누적", BRIGHT_RED]]}
          labels={[["1,500,000", 66]]}
          tag={["969,993", 124]}
        >
          <Trace points={INDIVIDUAL} color={BRIGHT_RED} />
        </Study>

        <Study
          name="Momentum"
          height={140}
          top={16}
          rows={[103, 151]}
          legend={[["Momentum(12)", RED], ["Signal(9)", PURPLE]]}
          labels={[["-10,000", 136]]}
          tag={["1,080", 82]}
          tagColor={RED}
        >
          <Trace points={MOMENTUM} color={RED} />
          <Trace points={SIGNAL} color={PURPLE} />
          {SELL_MARKS.map(([x, y]) => (
            <path key={x} transform={`translate(${x} ${y})`} d="M-9,0 H9 V28 H25 L0,54 L-25,28 H-9Z" fill="#0078ff" />
          ))}
          {BUY_MARKS.map(([x, y]) => (
            <path key={x} transform={`translate(${x} ${y})`} d="M0,0 L25,26 H9 V54 H-9 V26 H-25Z" fill={RED} />
          ))}
        </Study>

        <Study
          name="거래량"
          height={140}
          top={156}
          rows={[224, 259]}
          legend={[["거래량", RED], ["5", GREEN], ["20", RED], ["60", PURPLE]]}
          labels={[["4,000K", 69], ["2,000K", 104]]}
          tag={["940,148", 122]}
          tagColor={TEAL}
          wideTag
          unit="x 1000"
        >
          {VOLUMES.map(([x, y, c]) => (
            <rect key={x} x={+x - 7} y={+y} width={14} height={883 - +y} fill={VOLUME_COLORS[c]} />
          ))}
          <Trace points={VOLUME_MA5} color={GREEN} />
          <Trace points={VOLUME_MA20} color={RED} />
          <Trace points={VOLUME_MA60} color={PURPLE} />
        </Study>

        <DateAxis>
          <DateTicks viewBox="1 0 898 8" preserveAspectRatio="none">
            {MONTHS.map((x) => <rect key={x} x={x - 1} y={0} width={2} height={8} fill="#8a8a8a" />)}
          </DateTicks>
          {DATES.map((d) => <span key={d}>{d}</span>)}
        </DateAxis>
      </Chart>

      <TickerBar>
        <MenuButton>
          <svg width="54" height="32" viewBox="0 0 54 32">
            <path d="M0 2 H54 M0 16 H54 M0 30 H54" stroke={ORANGE} strokeWidth="4" />
          </svg>
          전체메뉴
        </MenuButton>
        <Separator />
        <IndexName>니케이</IndexName>
        <IndexValue>
          21,835.53
          <svg width="38" height="34" viewBox="0 0 38 34">
            <path d="M19 0 L38 34 H0Z" fill={PRICE_RED} />
          </svg>
          56.79 (0.26)
        </IndexValue>
        <TickerToggle>
          <Pill>OFF</Pill>
          티커
        </TickerToggle>
      </TickerBar>

      <NavBar aria-label="시스템 탐색">
        <NavPair>
          <svg width="18" height="18" viewBox="0 0 18 18">
            <circle cx="9" cy="9" r="9" fill="#6e6e6e" />
          </svg>
          <IconButton aria-label="최근 앱">
            <svg width="48" height="54" viewBox="0 0 48 54">
              <path d="M44 0 V16 Q44 21 39 21 H0 M46 33 H7 Q2 33 2 38 V54" fill="none" stroke="#6e6e6e" strokeWidth="4" />
            </svg>
          </IconButton>
        </NavPair>
        <IconButton aria-label="홈">
          <svg width="48" height="52" viewBox="0 0 48 52">
            <path d="M2 51 V8 Q2 3 7 3 H48 M46 14 V44 Q46 49 41 49 H12" fill="none" stroke="#6e6e6e" strokeWidth="4" />
          </svg>
        </IconButton>
        <IconButton aria-label="뒤로 가기">
          <svg width="48" height="52" viewBox="0 0 48 52">
            <path d="M24 1 L3 23 Q1 27 5 27 H47 M8 34 L24 51" fill="none" stroke="#6e6e6e" strokeWidth="4" />
          </svg>
        </IconButton>
      </NavBar>
    </Page>
  );
}
